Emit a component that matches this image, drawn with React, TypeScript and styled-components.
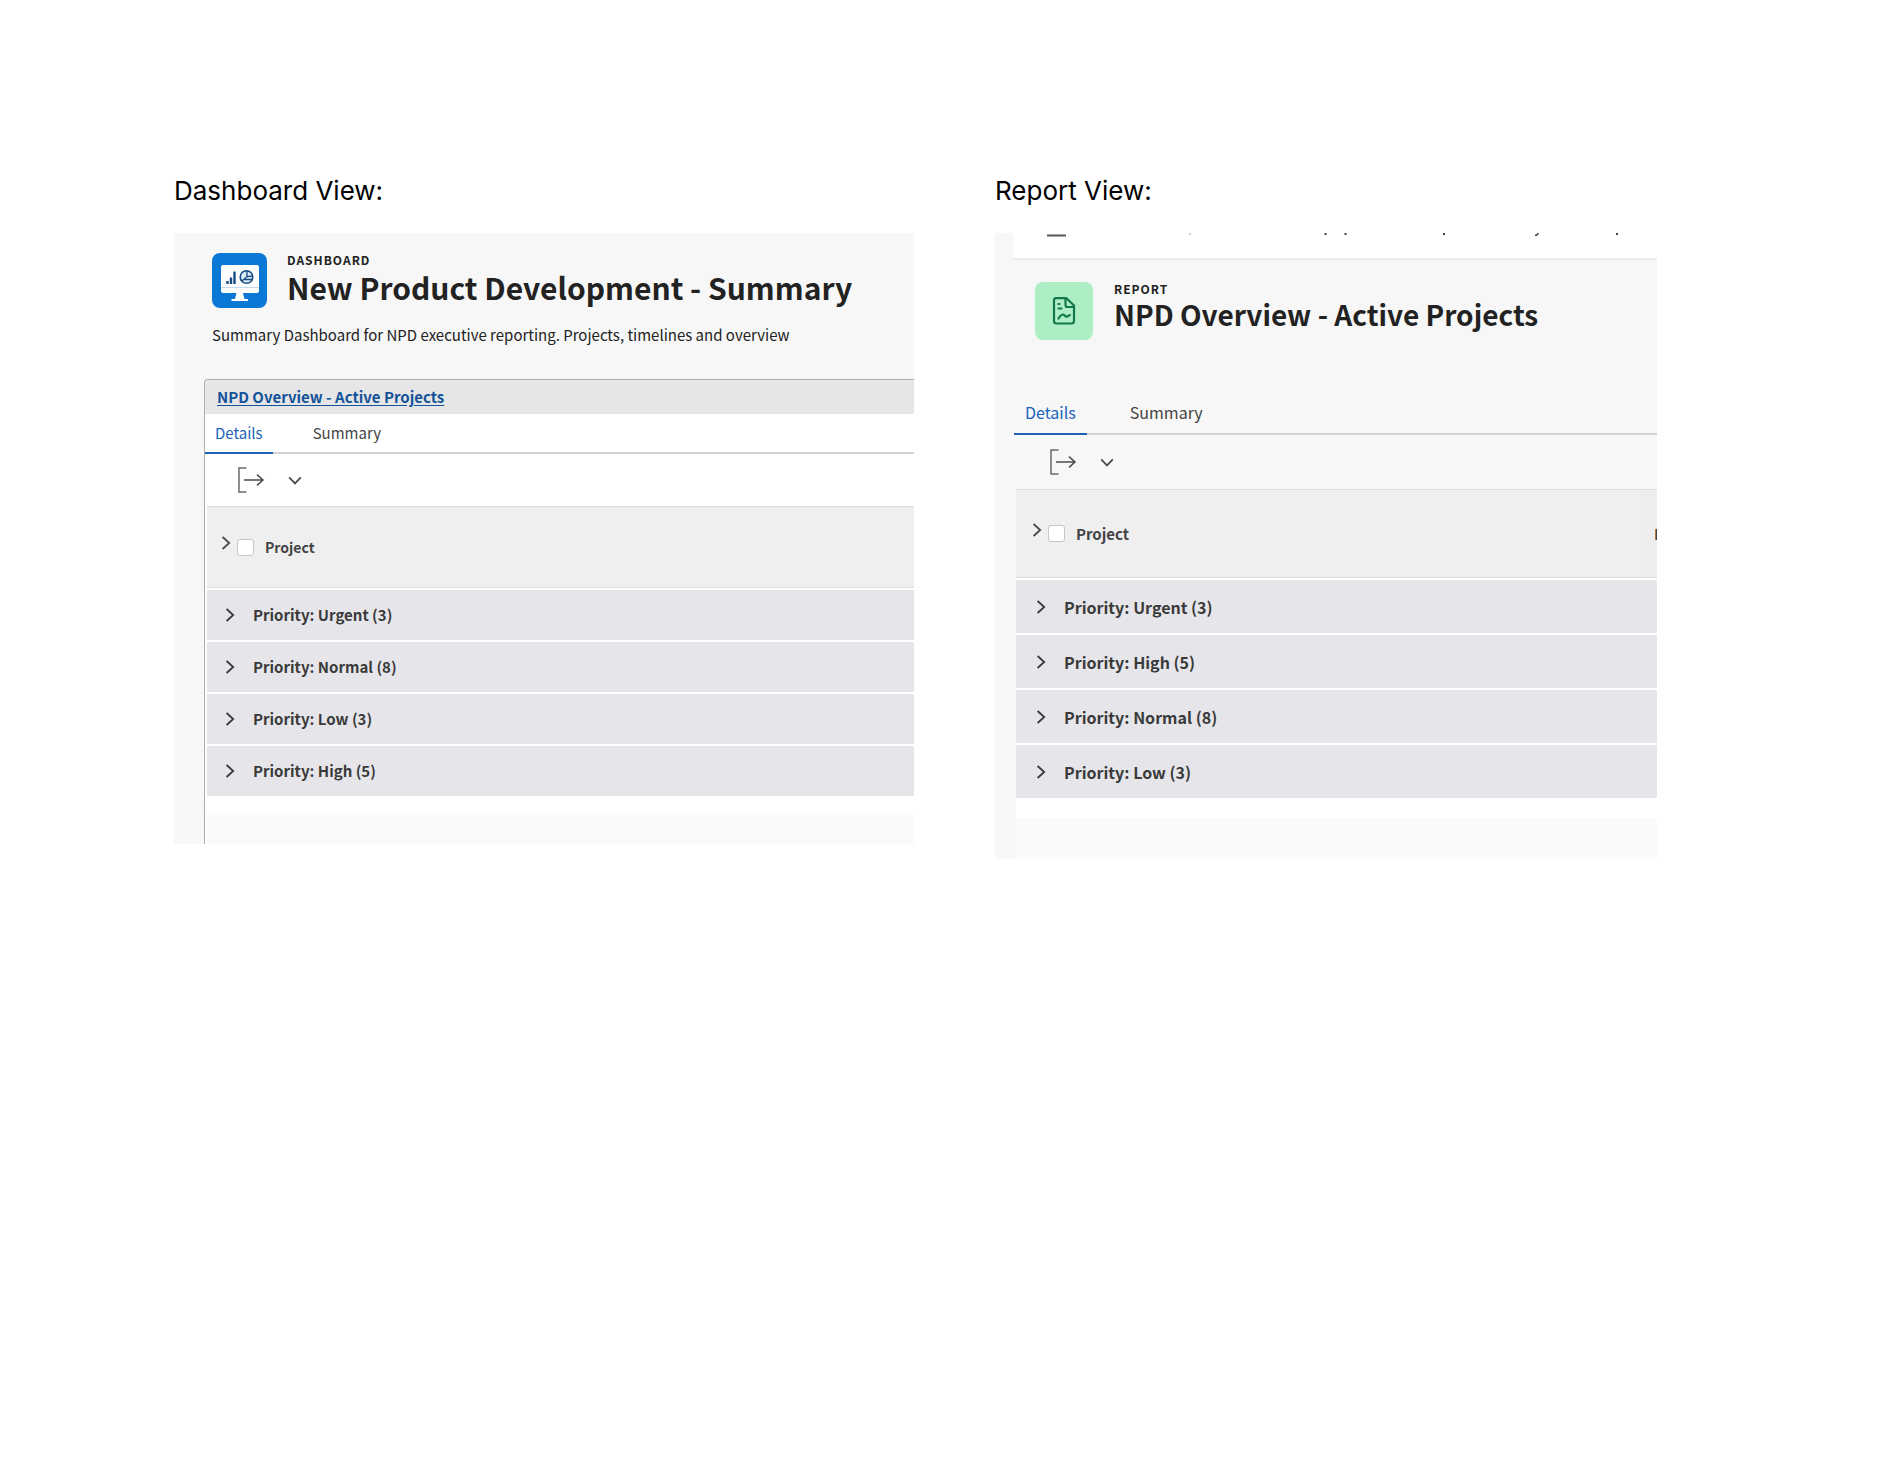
import React, { useState } from "react";
import styled, { createGlobalStyle } from "styled-components";

const GlobalStyle = createGlobalStyle`
  *, *::before, *::after { box-sizing: border-box; }
  body { margin: 0; background: #ffffff; }
  button, input { font: inherit; color: inherit; }
`;

const uiFont = `"Noto Sans CJK SC", "Noto Sans", sans-serif`;

type Size = "regular" | "large";
interface Sized {
  $size: Size;
}
const pick = (size: Size, regular: string, large: string) => (size === "large" ? large : regular);

const Page = styled.main`
  display: grid;
  grid-template-columns: minmax(0, 740fr) minmax(0, 662fr);
  column-gap: 81px;
  align-items: start;
  padding: 174px 246px 0 174px;
  font-family: ${uiFont};
  color: #222222;
`;

const Column = styled.section`
  display: flex;
  flex-direction: column;
  gap: 25px;
`;

const ViewHeading = styled.h2`
  margin: 0;
  font-family: Inter, Roboto, sans-serif;
  font-size: 26px;
  line-height: 34px;
  font-weight: 400;
  color: #000000;
`;

const Panel = styled.article<{ $indent: number }>`
  overflow: hidden;
  background: #f7f7f7;
  padding-left: ${(p) => p.$indent}px;
`;

const TopBar = styled.div`
  height: 27px;
  background: #ffffff;
  border-bottom: 2px solid #ececec;
`;

const ObjectHeader = styled.header<Sized>`
  display: flex;
  align-items: flex-start;
  gap: ${(p) => pick(p.$size, "20px", "21px")};
  padding: ${(p) => pick(p.$size, "20px 0 0 8px", "22px 0 0 22px")};
`;

const Tile = styled.div<Sized & { $color: string }>`
  display: flex;
  align-items: center;
  justify-content: center;
  flex: none;
  width: ${(p) => pick(p.$size, "55px", "58px")};
  height: ${(p) => pick(p.$size, "55px", "58px")};
  border-radius: 8px;
  background: ${(p) => p.$color};
`;

const Titles = styled.div`
  display: flex;
  flex-direction: column;
`;

const Kind = styled.span`
  font-size: 12px;
  line-height: 14px;
  font-weight: 700;
  letter-spacing: 1px;
  text-transform: uppercase;
`;

const Title = styled.h1<Sized>`
  margin: 0;
  font-size: ${(p) => pick(p.$size, "30px", "28px")};
  line-height: ${(p) => pick(p.$size, "41px", "37px")};
  font-weight: 700;
  white-space: nowrap;
`;

const Description = styled.p`
  margin: 0;
  padding: 14px 0 32px 8px;
  font-size: 15px;
  line-height: 25px;
  white-space: nowrap;
`;

const Widget = styled.section`
  border: 1px solid #adadad;
  border-right: 0;
  border-bottom: 0;
  border-top-left-radius: 4px;
  background: #ffffff;
`;

const WidgetBar = styled.div`
  padding-left: 12px;
  height: 34px;
  background: #e6e6e6;
  border-top-left-radius: 3px;
`;

const WidgetLink = styled.a`
  font-size: 15px;
  line-height: 34px;
  font-weight: 700;
  color: #14539a;
  text-underline-offset: 2px;
`;

const Tabs = styled.div<Sized>`
  display: flex;
  gap: ${(p) => pick(p.$size, "30px", "32px")};
  border-bottom: 2px solid #d5d5d5;
  margin-left: ${(p) => pick(p.$size, "0", "1px")};
`;

const Tab = styled.button<Sized & { $active: boolean }>`
  height: ${(p) => pick(p.$size, "40px", "44px")};
  margin-bottom: -2px;
  padding: 0 ${(p) => pick(p.$size, "10px", "11px")};
  border: 0;
  border-bottom: 2px solid ${(p) => (p.$active ? "#1f62b5" : "transparent")};
  background: none;
  font-size: ${(p) => pick(p.$size, "15px", "16px")};
  line-height: 24px;
  color: ${(p) => (p.$active ? "#1a64bd" : "#444444")};
`;

const Toolbar = styled.div<Sized>`
  display: flex;
  align-items: center;
  gap: 22px;
  height: ${(p) => pick(p.$size, "52px", "54px")};
  padding-left: ${(p) => pick(p.$size, "32px", "36px")};
`;

const IconButton = styled.button`
  display: flex;
  padding: 0;
  border: 0;
  background: none;
  color: #4b4b4b;
`;

const TableArea = styled.div<Sized>`
  padding-left: ${(p) => pick(p.$size, "2px", "3px")};
`;

const Sheet = styled.div`
  background: #ffffff;
`;

const Table = styled.table`
  width: 100%;
  table-layout: fixed;
  border-collapse: separate;
  border-spacing: 0;
`;

const HeadCell = styled.th<Sized & { $clipped?: boolean }>`
  width: ${(p) => (p.$clipped ? "16px" : "auto")};
  height: ${(p) => pick(p.$size, "82px", "89px")};
  padding: 0 0 0 ${(p) => (p.$clipped ? "13px" : pick(p.$size, "11px", "13px"))};
  overflow: hidden;
  background: ${(p) => (p.$clipped ? "#ededed" : "#efefef")};
  border-top: 1px solid #dedede;
  border-bottom: 1px solid #dedede;
  font-size: ${(p) => pick(p.$size, "14px", "15px")};
  line-height: 24px;
  font-weight: 700;
  text-align: left;
  color: #444444;
`;

const HeadContent = styled.div`
  display: flex;
  align-items: center;
  gap: 3px;
`;

const HeadExpand = styled(IconButton)`
  padding-bottom: 8px;
`;

const CheckLabel = styled.label`
  display: flex;
  align-items: center;
  gap: 11px;
`;

const Check = styled.input`
  appearance: none;
  width: 17px;
  height: 17px;
  margin: 0;
  border: 1px solid #c6c6c6;
  border-radius: 3px;
  background: #ffffff;
`;

const GroupCell = styled.td<Sized>`
  height: ${(p) => pick(p.$size, "52px", "55px")};
  padding: 0;
  border-top: 2px solid #ffffff;
  background: #e6e6ea;
`;

const GroupButton = styled.button<Sized>`
  display: flex;
  align-items: center;
  gap: 15px;
  width: 100%;
  padding: 0 0 0 ${(p) => pick(p.$size, "15px", "17px")};
  border: 0;
  background: none;
  font-size: ${(p) => pick(p.$size, "15px", "16px")};
  line-height: 24px;
  font-weight: 700;
  color: #3a3a3a;
`;

const SheetEnd = styled.div<Sized>`
  height: ${(p) => pick(p.$size, "48px", "61px")};
  border-top: ${(p) => pick(p.$size, "19px", "20px")} solid #ffffff;
  background: #fafafa;
`;

const ReportBody = styled.section`
  padding-top: 51px;
`;

const Chevron = ({ down = false }: { down?: boolean }) => (
  <svg width="16" height="16" viewBox="0 0 16 16" fill="none" stroke="currentColor" strokeWidth="1.8" aria-hidden="true">
    <path d={down ? "M2.2 5.4 8 11.4l5.8-6" : "M4.600 2l6.600 6-6.600 6"} />
  </svg>
);

const ExportIcon = () => (
  <svg width="28" height="28" viewBox="0 0 28 28" fill="none" stroke="currentColor" aria-hidden="true">
    <path d="M9.500 2H2v24h7.500" strokeWidth="1.500" stroke="#6a6a6a" />
    <path d="M7 14h19M20 8.600 26 14l-6 5.400" strokeWidth="1.500" />
  </svg>
);

const DashboardIcon = () => (
  <svg width="55" height="55" viewBox="0 0 55 55" aria-hidden="true">
    <rect x="9" y="12" width="38" height="28" rx="2" fill="#ffffff" />
    <path d="M9 34.500h38" stroke="#c3d9ee" />
    <path d="M24.500 40h6.500l1.500 6h3.500v2H19.500v-2H23z" fill="#ffffff" />
    <path d="M15.500 31v-3M19 31v-6.500M22.500 31V18.500" stroke="#174a83" strokeWidth="2.400" />
    <circle cx="34.500" cy="24" r="6.300" fill="#dbeaf8" stroke="#174a83" strokeWidth="1.600" />
    <path d="M35 17.700v6L29.800 28M35 23.700l5.800-.7M31.500 26.500h9" fill="none" stroke="#174a83" strokeWidth="1.300" />
  </svg>
);

const ReportIcon = () => (
  <svg width="24" height="28" viewBox="0 0 24 28" fill="none" stroke="#12784a" strokeWidth="2.200" strokeLinejoin="round" strokeLinecap="round" aria-hidden="true">
    <path d="M4 1.200h10.500L22 8.500v15.500a2.500 2.500 0 0 1-2.500 2.500h-15A2.500 2.500 0 0 1 2 24V3.500A2.300 2.300 0 0 1 4 1.200z" />
    <path d="M13.500 1.700V8a2 2 0 0 0 2 2H22" />
    <path d="M6.500 7h1M6.500 11.500h3M6.500 21.500c1.500-2.500 3-4 4.500-4s1.800 2.200 3.500 2.200 2-1.500 3.500-1.700" />
  </svg>
);

const RemnantSvg = styled.svg`
  display: block;
`;

// Lower edge of the scrolled-away navigation row.
const NavRemnant = () => (
  <RemnantSvg width="640" height="6" viewBox="0 0 640 6" aria-hidden="true">
    <path d="M34 2.500h19" stroke="#555555" strokeWidth="2" />
    <path d="M176 1h2" stroke="#bbbbbb" strokeWidth="1.500" />
    <path d="M311.500 1h2M331.500 1h2M430 1h2M603 1h2" stroke="#444444" strokeWidth="2" />
    <path d="M522 2.200h1.500L525.500 0" fill="none" stroke="#444444" strokeWidth="1.500" />
  </RemnantSvg>
);

interface ListProps {
  size: Size;
  groups: string[];
  clippedColumn?: string;
}

function ProjectList({ size, groups, clippedColumn }: ListProps) {
  const [tab, setTab] = useState("Details");
  const checkId = `select-all-${size}`;
  return (
    <>
      <Tabs $size={size} role="tablist">
        {["Details", "Summary"].map((name) => (
          <Tab key={name} type="button" role="tab" aria-selected={tab === name} $size={size} $active={tab === name} onClick={() => setTab(name)}>
            {name}
          </Tab>
        ))}
      </Tabs>
      <Toolbar $size={size}>
        <IconButton type="button" aria-label="Export">
          <ExportIcon />
        </IconButton>
        <IconButton type="button" aria-label="Export options">
          <Chevron down />
        </IconButton>
      </Toolbar>
      <TableArea $size={size}>
        <Sheet>
          <Table>
            <thead>
              <tr>
                <HeadCell scope="col" $size={size}>
                  <HeadContent>
                    <HeadExpand type="button" aria-label="Expand all">
                      <Chevron />
                    </HeadExpand>
                    <CheckLabel htmlFor={checkId}>
                      <Check id={checkId} type="checkbox" />
                      Project
                    </CheckLabel>
                  </HeadContent>
                </HeadCell>
                {clippedColumn && (
                  <HeadCell scope="col" $size={size} $clipped>
                    {clippedColumn}
                  </HeadCell>
                )}
              </tr>
            </thead>
            <tbody>
              {groups.map((group) => (
                <tr key={group}>
                  <GroupCell $size={size} colSpan={clippedColumn ? 2 : 1}>
                    <GroupButton type="button" aria-expanded={false} $size={size}>
                      <Chevron />
                      Priority: {group}
                    </GroupButton>
                  </GroupCell>
                </tr>
              ))}
            </tbody>
          </Table>
          <SheetEnd $size={size} />
        </Sheet>
      </TableArea>
    </>
  );
}

export default function App() {
  return (
    <>
      <GlobalStyle />
      <Page>
        <Column>
          <ViewHeading>Dashboard View:</ViewHeading>
          <Panel $indent={30}>
            <ObjectHeader $size="regular">
              <Tile $size="regular" $color="#0a78d4">
                <DashboardIcon />
              </Tile>
              <Titles>
                <Kind>Dashboard</Kind>
                <Title $size="regular">New Product Development - Summary</Title>
              </Titles>
            </ObjectHeader>
            <Description>Summary Dashboard for NPD executive reporting. Projects, timelines and overview</Description>
            <Widget>
              <WidgetBar>
                <WidgetLink href="#report">NPD Overview - Active Projects</WidgetLink>
              </WidgetBar>
              <ProjectList size="regular" groups={["Urgent (3)", "Normal (8)", "Low (3)", "High (5)"]} />
            </Widget>
          </Panel>
        </Column>
        <Column>
          <ViewHeading>Report View:</ViewHeading>
          <Panel $indent={18}>
            <TopBar>
              <NavRemnant />
            </TopBar>
            <ObjectHeader $size="large">
              <Tile $size="large" $color="#adeec5">
                <ReportIcon />
              </Tile>
              <Titles>
                <Kind>Report</Kind>
                <Title $size="large">NPD Overview - Active Projects</Title>
              </Titles>
            </ObjectHeader>
            <ReportBody>
              <ProjectList size="large" groups={["Urgent (3)", "High (5)", "Normal (8)", "Low (3)"]} clippedColumn="I" />
            </ReportBody>
          </Panel>
        </Column>
      </Page>
    </>
  );
}
